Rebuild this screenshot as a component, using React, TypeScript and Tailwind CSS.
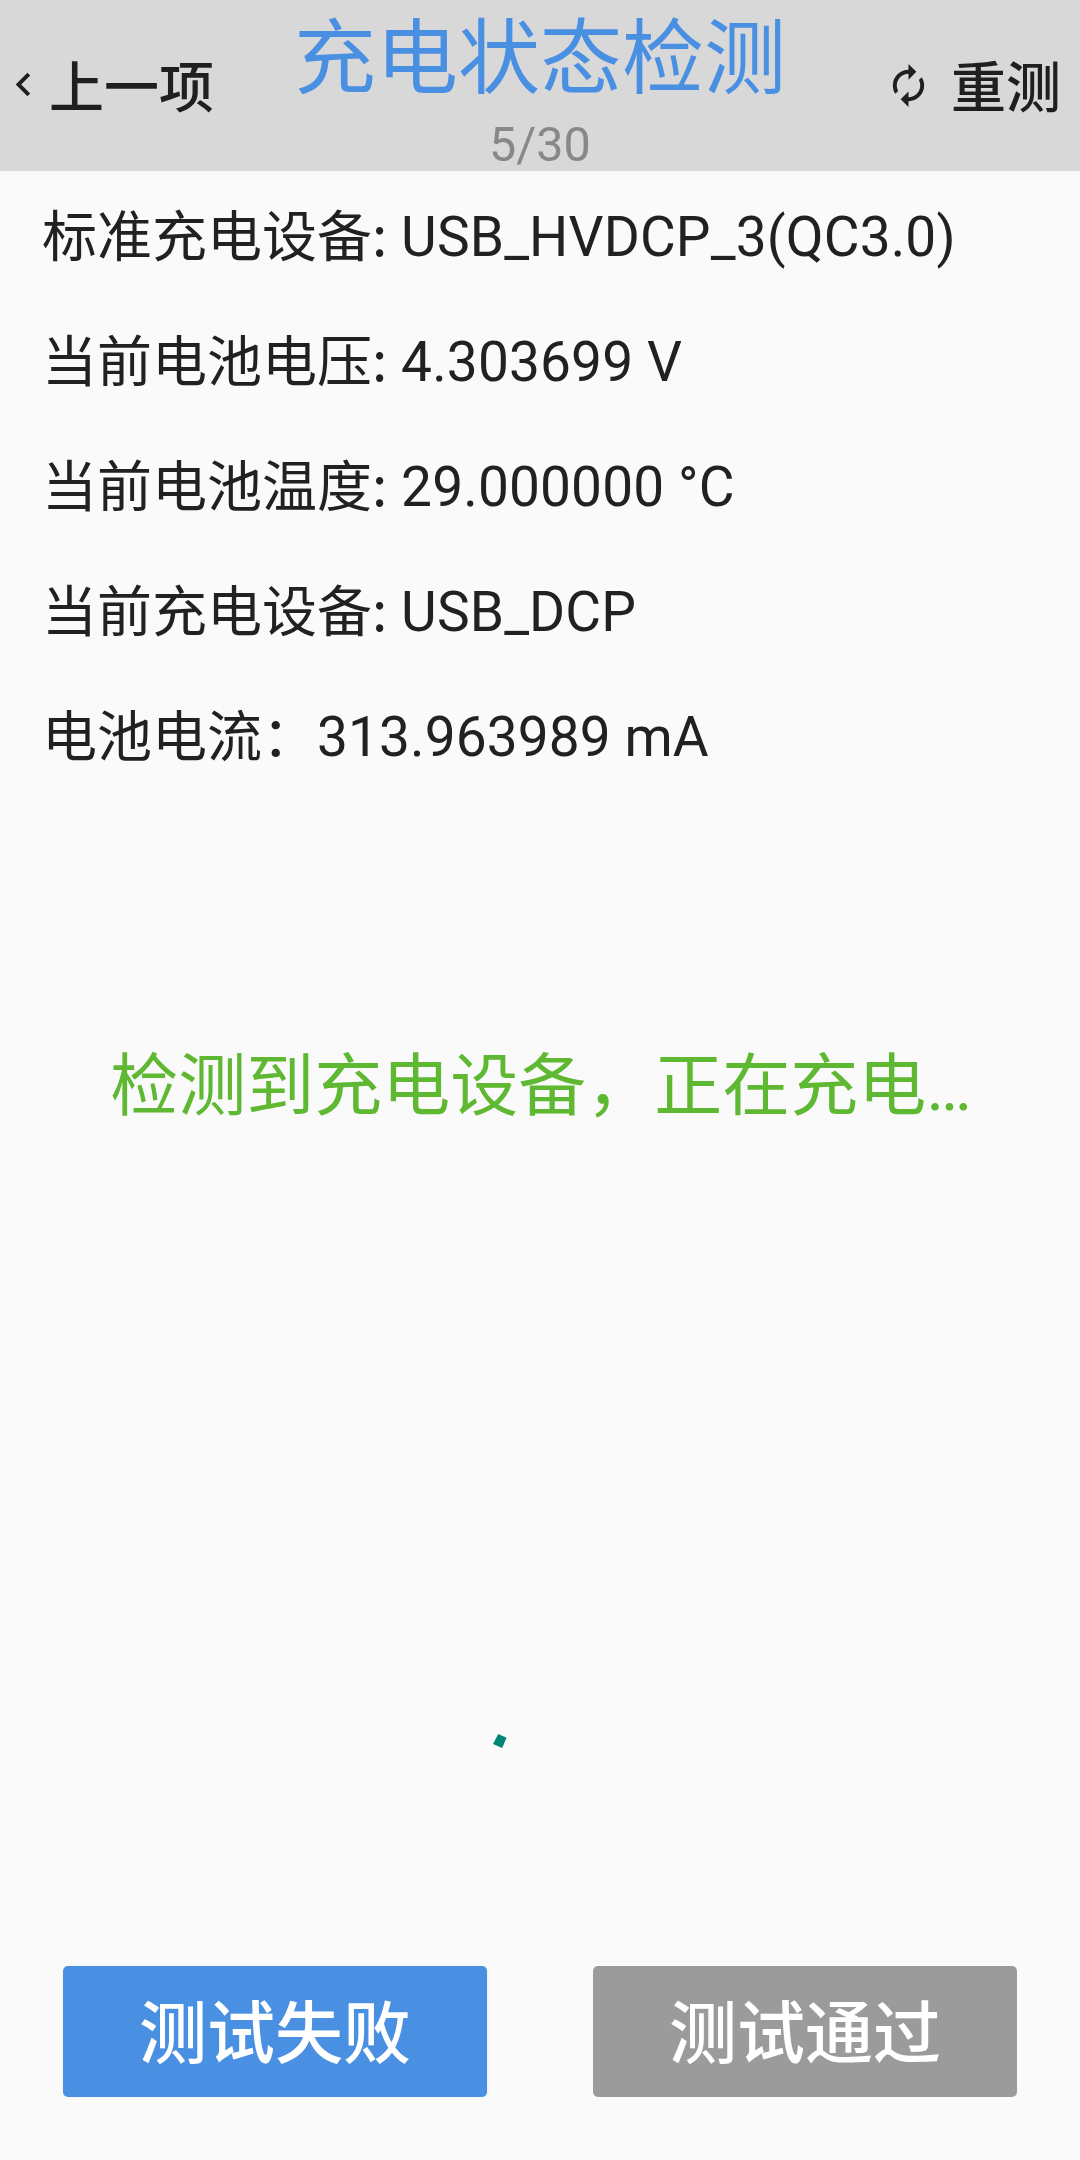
import { MdAutorenew, MdChevronLeft } from "react-icons/md";

const readings = [
  { label: "标准充电设备", value: "USB_HVDCP_3(QC3.0)" },
  { label: "当前电池电压", value: "4.303699 V" },
  { label: "当前电池温度", value: "29.000000 °C" },
  { label: "当前充电设备", value: "USB_DCP" },
];

function Header() {
  return (
    <header className="flex h-[171px] shrink-0 justify-between bg-[#d8d8d8] text-[#1f1f1f]">
      <button className="flex h-[171px] w-[240px] items-center text-[55px] leading-[80px] font-medium">
        <MdChevronLeft size={47} className="mb-[2px] shrink-0" />
        <span className="pt-1 pl-[2px] whitespace-nowrap">上一项</span>
      </button>
      <div className="flex flex-col items-center">
        <h1 className="pt-1 text-[82px] leading-[110px] text-[#4a90e2]">充电状态检测</h1>
        <p className="pt-[3px] text-[48.5px] leading-[56px] text-[#888888]">5/30</p>
      </div>
      <button className="flex h-[171px] w-[240px] items-center justify-end pr-[19px] text-[55px] leading-[80px] font-medium">
        <MdAutorenew size={47} className="shrink-0" />
        <span className="pt-1 pl-[19px] whitespace-nowrap">重测</span>
      </button>
    </header>
  );
}

function Readings() {
  return (
    <ul className="h-[861px] shrink-0 px-[42px] pt-[4px] text-[55px] leading-[125px]">
      {readings.map(({ label, value }) => (
        <li key={label} className="h-[125px]">
          {label}
          <span className="font-['Noto_Sans_CJK_SC',sans-serif] leading-none">:</span>
          <span className="tracking-[0.15px]"> {value}</span>
        </li>
      ))}
      <li className="h-[125px]">
        电池电流：<span className="tracking-[0.1px]">313.963989 mA</span>
      </li>
    </ul>
  );
}

export default function App() {
  return (
    <div className="flex h-[2160px] w-[1080px] flex-col overflow-hidden bg-[#fafafa] font-['Roboto','Noto_Sans_CJK_SC',sans-serif] text-[#212121]">
      <Header />
      <Readings />
      <p className="h-[110px] shrink-0 pl-[2px] text-center text-[68px] leading-[110px] whitespace-nowrap text-[#5fb832]">
        检测到充电设备，正在充电…
      </p>
      <div className="flex flex-1 items-end pb-[216px] pl-[490px]">
        <svg width="20" height="20" viewBox="0 0 20 20" fill="#008577">
          <path d="M8.3 4l8.2 3.8-4.3 10.2L3 14z" />
        </svg>
      </div>
      <footer className="flex shrink-0 justify-between px-[63px] pb-[63px] text-[68px] font-medium text-white">
        <button className="h-[131px] w-[424px] rounded-[5px] bg-[#4a90e2] pt-[8px] leading-[123px] shadow-[1px_0_3px_rgba(0,0,0,0.06)]">
          测试失败
        </button>
        <button className="h-[131px] w-[424px] rounded-[5px] bg-[#9b9b9b] pt-[8px] leading-[123px]">
          测试通过
        </button>
      </footer>
    </div>
  );
}
